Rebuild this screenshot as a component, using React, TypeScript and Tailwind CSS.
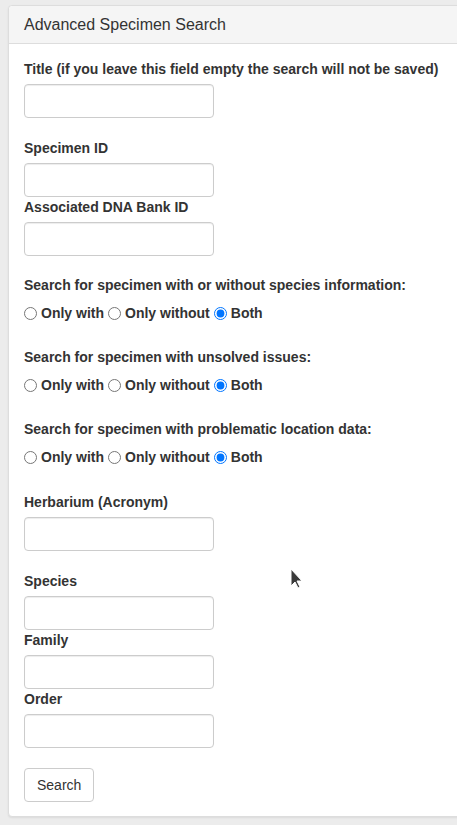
import React from 'react';

const labelCls = "block text-[14px] leading-[20px] font-bold text-[#333] mb-[5px]";
const inputCls = "block w-[190px] h-[34px] rounded-[4px] border border-[#ccc] bg-white shadow-[inset_0_1px_1px_rgba(0,0,0,0.075)]";

function Field({ label, className }: { label: string; className?: string }) {
  return (
    <div className={className}>
      <label className={labelCls}>{label}</label>
      <input type="text" className={inputCls} />
    </div>
  );
}

function RadioGroup({ label, name, className }: { label: string; name: string; className?: string }) {
  const opts = ['Only with', 'Only without', 'Both'];
  return (
    <div className={className}>
      <label className={labelCls}>{label}</label>
      <div className="flex items-center pt-[2px] h-[24px] text-[14px] font-bold text-[#333]">
        {opts.map((o, i) => (
          <label key={o} className="flex items-center">
            <input
              type="radio"
              name={name}
              defaultChecked={o === 'Both'}
              className={i === 0 ? "m-0 mr-[4px] w-[13px] h-[13px]" : "ml-[4px] mr-[4px] my-0 w-[13px] h-[13px]"}
            />
            <span>{o}</span>
          </label>
        ))}
      </div>
    </div>
  );
}

export default function App() {
  return (
    <div className="relative w-[457px] h-[825px] overflow-hidden bg-[#ececec] pt-[5px] pl-[8px]" style={{ fontFamily: '"Liberation Sans", Arial, sans-serif' }}>
      <div className="w-[470px] bg-white border border-[#dddddd] rounded-[4px] shadow-[0_1px_2px_rgba(0,0,0,0.08)]">
        <div className="bg-[#f5f5f5] border-b border-[#dddddd] rounded-t-[4px] px-[15px] py-[9px] text-[16px] leading-[19px] text-[#333]">
          Advanced Specimen Search
        </div>
        <div className="px-[15px] pt-[15px] pb-[14px]">
          <Field label="Title (if you leave this field empty the search will not be saved)" />
          <Field label="Specimen ID" className="mt-[20px]" />
          <Field label="Associated DNA Bank ID" />
          <RadioGroup label="Search for specimen with or without species information:" name="species" className="mt-[19px]" />
          <RadioGroup label="Search for specimen with unsolved issues:" name="issues" className="mt-[23px]" />
          <RadioGroup label="Search for specimen with problematic location data:" name="location" className="mt-[23px]" />
          <Field label="Herbarium (Acronym)" className="mt-[24px]" />
          <Field label="Species" className="mt-[20px]" />
          <Field label="Family" />
          <Field label="Order" />
          <button className="mt-[20px] h-[34px] px-[12px] rounded-[4px] border border-[#ccc] bg-white text-[14px] text-[#333]">
            Search
          </button>
        </div>
      </div>
      <svg className="absolute left-[290px] top-[568px]" width="14" height="22" viewBox="0 0 14 22">
        <path d="M1 1 L1 18 L5 14 L8 20 L10 19 L7 13 L12 13 Z" fill="#3a3a3a" stroke="#fff" strokeWidth="1" />
      </svg>
    </div>
  );
}
